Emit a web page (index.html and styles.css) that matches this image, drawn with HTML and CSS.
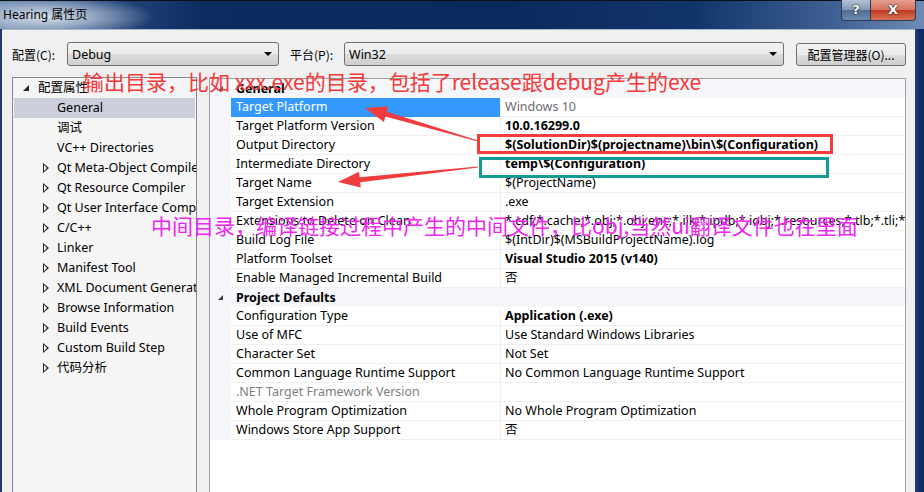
FILE: index.html
```html
<!DOCTYPE html>
<html>
<head>
<meta charset="utf-8">
<title>Hearing 属性页</title>
<link rel="stylesheet" href="styles.css">
</head>
<body>
<div class="window">
  <div class="titlebar">
    <div class="title">Hearing 属性页</div>
    <div class="caption">
      <div class="cap-btn help">?</div>
      <div class="cap-btn close">X</div>
    </div>
  </div>
  <div class="frame">
    <div class="lb"></div>
    <div class="client">
      <div class="toolbar">
        <span class="lbl lbl1">配置(C):</span>
        <div class="combo combo1"><span>Debug</span><i class="arrow"></i></div>
        <span class="lbl lbl2">平台(P):</span>
        <div class="combo combo2"><span>Win32</span><i class="arrow"></i></div>
        <div class="btn">配置管理器(O)...</div>
      </div>
      <div class="main">
        <div class="tree">
          <div class="node root"><i class="tri-open"></i><span>配置属性</span></div>
          <div class="node child sel"><span>General</span></div>
          <div class="node child"><span>调试</span></div>
          <div class="node child"><span>VC++ Directories</span></div>
          <div class="node child"><i class="tri-closed"></i><span>Qt Meta-Object Compiler</span></div>
          <div class="node child"><i class="tri-closed"></i><span>Qt Resource Compiler</span></div>
          <div class="node child"><i class="tri-closed"></i><span>Qt User Interface Compiler</span></div>
          <div class="node child"><i class="tri-closed"></i><span>C/C++</span></div>
          <div class="node child"><i class="tri-closed"></i><span>Linker</span></div>
          <div class="node child"><i class="tri-closed"></i><span>Manifest Tool</span></div>
          <div class="node child"><i class="tri-closed"></i><span>XML Document Generator</span></div>
          <div class="node child"><i class="tri-closed"></i><span>Browse Information</span></div>
          <div class="node child"><i class="tri-closed"></i><span>Build Events</span></div>
          <div class="node child"><i class="tri-closed"></i><span>Custom Build Step</span></div>
          <div class="node child"><i class="tri-closed"></i><span>代码分析</span></div>
        </div>
        <div class="grid">
          <div class="cat"><div class="gut"><i class="tri-cat"></i></div><div class="cat-name">General</div></div>
          <div class="prop selected"><div class="gut"></div><div class="name">Target Platform</div><div class="val gray">Windows 10</div></div>
          <div class="prop"><div class="gut"></div><div class="name">Target Platform Version</div><div class="val b">10.0.16299.0</div></div>
          <div class="prop"><div class="gut"></div><div class="name">Output Directory</div><div class="val b">$(SolutionDir)$(projectname)\bin\$(Configuration)</div></div>
          <div class="prop"><div class="gut"></div><div class="name">Intermediate Directory</div><div class="val b">temp\$(Configuration)</div></div>
          <div class="prop"><div class="gut"></div><div class="name">Target Name</div><div class="val">$(ProjectName)</div></div>
          <div class="prop"><div class="gut"></div><div class="name">Target Extension</div><div class="val">.exe</div></div>
          <div class="prop"><div class="gut"></div><div class="name">Extensions to Delete on Clean</div><div class="val">*.cdf;*.cache;*.obj;*.obj.enc;*.ilk;*.ipdb;*.iobj;*.resources;*.tlb;*.tli;*.tlh;*.tmp;*.rsp;*.pgc;*.pgd;*.meta;*.tlog;*.manifest;*.res;*.pch;*.exp;*.idb</div></div>
          <div class="prop"><div class="gut"></div><div class="name">Build Log File</div><div class="val">$(IntDir)$(MSBuildProjectName).log</div></div>
          <div class="prop"><div class="gut"></div><div class="name">Platform Toolset</div><div class="val b">Visual Studio 2015 (v140)</div></div>
          <div class="prop"><div class="gut"></div><div class="name">Enable Managed Incremental Build</div><div class="val">否</div></div>
          <div class="cat"><div class="gut"><i class="tri-cat"></i></div><div class="cat-name">Project Defaults</div></div>
          <div class="prop"><div class="gut"></div><div class="name">Configuration Type</div><div class="val b">Application (.exe)</div></div>
          <div class="prop"><div class="gut"></div><div class="name">Use of MFC</div><div class="val">Use Standard Windows Libraries</div></div>
          <div class="prop"><div class="gut"></div><div class="name">Character Set</div><div class="val">Not Set</div></div>
          <div class="prop"><div class="gut"></div><div class="name">Common Language Runtime Support</div><div class="val">No Common Language Runtime Support</div></div>
          <div class="prop"><div class="gut"></div><div class="name gray2">.NET Target Framework Version</div><div class="val"></div></div>
          <div class="prop"><div class="gut"></div><div class="name">Whole Program Optimization</div><div class="val">No Whole Program Optimization</div></div>
          <div class="prop"><div class="gut"></div><div class="name">Windows Store App Support</div><div class="val">否</div></div>
        </div>
      </div>
    </div>
    <div class="rb"></div>
  </div>

  <svg class="marks" width="924" height="492" viewBox="0 0 924 492">
    <rect x="478.5" y="135.5" width="353" height="17" fill="none" stroke="#f43c3c" stroke-width="3"/>
    <rect x="480.5" y="158.5" width="347" height="18" fill="none" stroke="#139c97" stroke-width="3"/>
    <polygon fill="#f03c3c" points="365,108 383.9,121.9 385.4,116.6 477.9,141.5 478.1,140.5 386.8,111.8 388.3,106.5"/>
    <polygon fill="#f03c3c" points="338,182 359.0,171.7 359.6,177.2 477.9,166.5 478.1,167.5 360.2,182.2 360.8,187.6"/>
  </svg>
  <div class="note note-red">输出目录，比如 xxx.exe的目录，包括了release跟debug产生的exe</div>
  <div class="note note-pink">中间目录，编译链接过程中产生的中间文件，比obj,当然ui翻译文件也在里面</div>
</div>
</body>
</html>
```

FILE: styles.css
```css
html, body {
  margin: 0;
  padding: 0;
  background: #0b2a5c;
}
.window {
  position: relative;
  width: 924px;
  height: 492px;
  overflow: hidden;
  font-family: "Noto Sans", "Noto Sans CJK SC", sans-serif;
  font-size: 12px;
  color: #000;
}
.titlebar {
  height: 29px;
  display: flex;
  align-items: flex-start;
  border-top: 1px solid #0a0f1a;
  box-sizing: border-box;
  background:
    radial-gradient(ellipse 110px 22px at 45px 16px, rgba(220,228,238,0.95) 0%, rgba(190,204,222,0.7) 45%, rgba(120,145,180,0) 100%),
    linear-gradient(90deg, #5d7aa6 0%, #2a4c80 10%, #0c2c60 22%, #0a2a5d 55%, #123569 75%, #3d5f92 90%, #6f8bb4 100%);
}
.title {
  padding-left: 3px;
  line-height: 28px;
  font-size: 12px;
  color: #000;
}
.caption {
  margin-left: auto;
  margin-right: 8px;
  display: flex;
  margin-top: -1px;
}
.cap-btn {
  height: 20px;
  border: 1px solid #2a3a58;
  border-top: none;
  color: #fff;
  font-weight: bold;
  font-size: 13px;
  line-height: 19px;
  text-align: center;
  text-shadow: 0 0 2px #222, 0 0 1px #000;
  font-family: "DejaVu Sans", sans-serif;
}
.help {
  width: 28px;
  border-radius: 0 0 0 4px;
  background: linear-gradient(#b4c2d6 0%, #8598b5 48%, #526b92 52%, #6e8ab2 100%);
}
.close {
  width: 44px;
  border-left: none;
  border-radius: 0 0 4px 0;
  background: linear-gradient(#e6a08e 0%, #d5735e 48%, #c1391f 52%, #d87456 100%);
}
.frame {
  display: flex;
  height: 463px;
}
.lb {
  width: 2px;
  background: #1c3b6d;
}
.rb {
  width: 9px;
  background: linear-gradient(90deg, #23437a 0%, #10306a 40%, #0c2a5e 100%);
}
.client {
  flex: 1;
  background: #f0f0f0;
  border-top: 1px solid #a9b7cc;
  overflow: hidden;
}
.toolbar {
  display: flex;
  align-items: center;
  padding-top: 12px;
  height: 24px;
}
.lbl {
  font-family: "Noto Sans CJK SC", sans-serif;
  font-size: 12px;
}
.lbl1 {
  margin-left: 10px;
  width: 55px;
}
.lbl2 {
  margin-left: 11px;
  width: 54px;
}
.combo {
  height: 24px;
  box-sizing: border-box;
  border: 1px solid #707070;
  border-radius: 3px;
  background: linear-gradient(#f2f2f2 0%, #ebebeb 50%, #dddddd 51%, #cfcfcf 100%);
  display: flex;
  align-items: center;
  padding-left: 4px;
  font-size: 12.5px;
}
.combo1 { width: 212px; }
.combo2 { width: 440px; }
.combo span { flex: 1; }
.arrow {
  width: 0;
  height: 0;
  border-left: 4px solid transparent;
  border-right: 4px solid transparent;
  border-top: 4px solid #000;
  margin-right: 6px;
}
.btn {
  margin-left: 12px;
  width: 110px;
  height: 23px;
  box-sizing: border-box;
  border: 1px solid #707070;
  border-radius: 3px;
  background: linear-gradient(#f2f2f2 0%, #ebebeb 50%, #dddddd 51%, #cfcfcf 100%);
  text-align: center;
  line-height: 21px;
  font-family: "Noto Sans CJK SC", sans-serif;
  font-size: 12px;
}
.main {
  display: flex;
  margin-top: 11px;
  height: 430px;
  gap: 12px;
}
.tree {
  margin-left: 10px;
  width: 185px;
  box-sizing: border-box;
  border: 1px solid #828790;
  background: #f5f5f5;
  overflow: hidden;
}
.node {
  height: 20px;
  line-height: 20px;
  white-space: nowrap;
  position: relative;
  font-size: 12.5px;
}
.node span {
  position: absolute;
  top: 0;
}
.root span { left: 25px; }
.child span { left: 44px; }
.sel {
  background: #cccedb;
  margin: 0 1px;
}
.sel span { left: 43px; }
.tri-open {
  position: absolute;
  left: 10px;
  top: 7px;
  width: 0;
  height: 0;
  border-left: 6px solid transparent;
  border-bottom: 6px solid #262626;
}
.tri-closed {
  position: absolute;
  left: 30px;
  top: 5px;
  width: 6px;
  height: 9px;
}
.tri-closed::before {
  content: "";
  position: absolute;
  left: 0;
  top: 0;
  border-top: 5px solid transparent;
  border-bottom: 5px solid transparent;
  border-left: 6px solid #222;
}
.tri-closed::after {
  content: "";
  position: absolute;
  left: 1px;
  top: 2px;
  border-top: 3px solid transparent;
  border-bottom: 3px solid transparent;
  border-left: 3px solid #f5f5f5;
}
.grid {
  margin-top: 1px;
  width: 697px;
  box-sizing: border-box;
  border: 1px solid #a0a0a0;
  background: #fff;
  overflow: hidden;
}
.cat {
  display: flex;
  height: 19px;
  background: #f5f7fb;
  align-items: center;
}
.gut {
  width: 21px;
  flex: none;
  height: 100%;
  background: #f5f7fb;
  position: relative;
}
.tri-cat {
  position: absolute;
  left: 8px;
  top: 7px;
  width: 0;
  height: 0;
  border-left: 5px solid transparent;
  border-bottom: 5px solid #3c3c3c;
}
.cat-name {
  font-weight: bold;
  padding-left: 5px;
  font-size: 12.5px;
}
.prop {
  display: flex;
  height: 19px;
}
.name, .val {
  box-sizing: border-box;
  height: 19px;
  line-height: 18px;
  border-bottom: 1px solid #f0f0f0;
  white-space: nowrap;
  overflow: hidden;
  padding-left: 5px;
  font-size: 12.5px;
}
.name {
  width: 269px;
  flex: none;
}
.val {
  flex: 1;
  border-left: 1px solid #f0f0f0;
  padding-left: 4px;
}
.selected .name {
  background: #3399ff;
  color: #fff;
  border-bottom-color: #3399ff;
}
.b { font-weight: bold; }
.gray { color: #6d6d6d; }
.gray2 { color: #808080; }
.marks {
  position: absolute;
  left: 0;
  top: 0;
  pointer-events: none;
}
.note {
  position: absolute;
  font-family: "Noto Sans CJK SC", sans-serif;
  font-size: 21px;
  line-height: 23px;
  white-space: nowrap;
}
.note-red {
  left: 83px;
  top: 70px;
  color: #f83838;
}
.note-pink {
  left: 151px;
  top: 214px;
  color: #f025f0;
}
```
